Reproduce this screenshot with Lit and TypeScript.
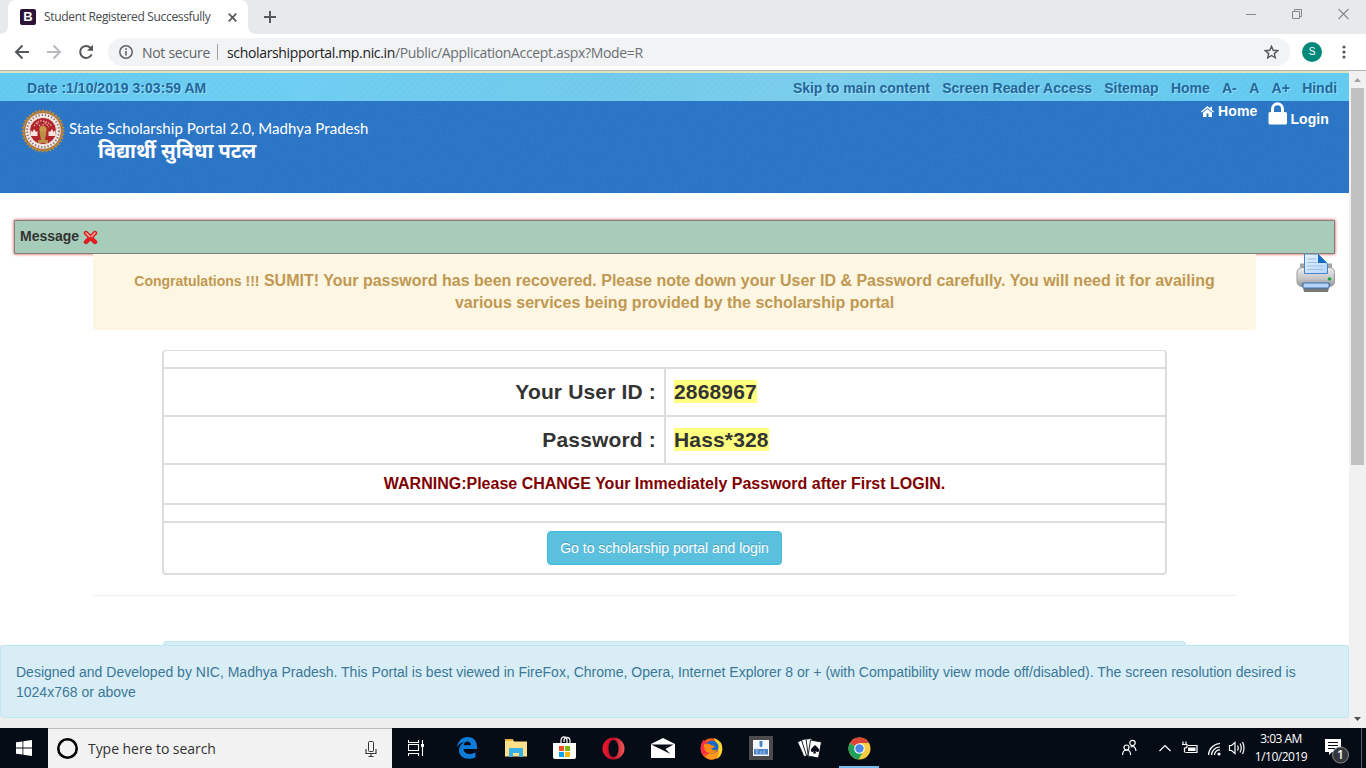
import { LitElement, html, css, svg } from "lit";
import { customElement } from "lit/decorators.js";

const seal = () => {
  const pts: string[] = [];
  for (let i = 0; i < 72; i++) {
    const r = i % 2 ? 19.6 : 22;
    const a = (i * Math.PI) / 36;
    pts.push(`${(22 + r * Math.cos(a)).toFixed(2)},${(22 + r * Math.sin(a)).toFixed(2)}`);
  }
  return html`<svg class="seal" width="44" height="44" viewBox="0 0 44 44">
    ${svg`<polygon points=${pts.join(" ")} fill="#b98637"/>`}
    <circle cx="22" cy="22" r="18.300" fill="#f3ebe6" stroke="#9a5a35" stroke-width=".8" />
    <circle cx="22" cy="22" r="16" fill="none" stroke="#8d6f72" stroke-width="2" stroke-dasharray="1.3 1.9" />
    <circle cx="22" cy="22" r="13.600" fill="#b0252b" stroke="#f3e2dc" stroke-width="1" />
    <path d="M13 17q4-6 9-5t9 5M16 14l4 4 4-4 4 4" stroke="#e0a49a" stroke-width="1.400" fill="none" stroke-dasharray="1.500 1.200" />
    <path d="M9.500 27v-6l2 2 1.500-3 2 3 1.500-1v5zM34.500 27v-6l-2 2-1.500-3-2 3-1.500-1v5z" fill="#f4e6df" />
    <circle cx="22" cy="20.500" r="3.600" fill="#c79a4a" />
    <path d="M18.500 23h7l-1.500 8h3v3H17v-3h3z" fill="#b98f45" />
  </svg>`;
};

@customElement("app-root")
export class AppRoot extends LitElement {
  static styles = css`
    :host { display: flex; flex-direction: column; width: 1366px; height: 768px; overflow: hidden; background: #fff; font-family: "Liberation Sans", Arial, sans-serif; color: #333; }
    * { box-sizing: border-box; }
    svg { display: block; flex: none; }
    .ui { font-family: "Open Sans", "Noto Sans", sans-serif; white-space: nowrap; }
    .tabs { height: 34px; flex: none; background: #e7eaed; display: flex; }
    .tab { width: 256px; height: 34px; display: flex; align-items: flex-end; position: relative; }
    .tab svg.shape { position: absolute; left: 0; top: 0; }
    .tabin { position: relative; display: flex; align-items: center; height: 34px; padding-left: 20px; width: 248px; }
    .fav { width: 16px; height: 16px; border-radius: 2px; background: #2b1436; color: #fff; font: bold 13px/16px "Liberation Sans", sans-serif; text-align: center; }
    .ttl { font-size: 12px; line-height: 16px; margin-left: 8px; width: 184px; color: #45494d; letter-spacing: -0.33px; }
    .plus { margin: 11px 0 0 8px; }
    .wins { margin-left: auto; display: flex; gap: 35px; padding: 8px 17px 0 0; }
    .bar { height: 36px; flex: none; display: flex; align-items: center; padding-left: 14px; background: #fff; }
    .bar .g { margin-right: 16px; }
    .omni { width: 1182px; height: 28px; border-radius: 14px; background: #f1f3f4; display: flex; align-items: center; padding-left: 11px; font-size: 14px; color: #5f6368; margin-left: -2px; }
    .ns { margin-left: 9px; letter-spacing: -0.3px; width: 75px; }
    .sep { width: 1px; height: 16px; background: #9aa0a6; margin-right: 9px; }
    .url { letter-spacing: -0.345px; color: #6b6f74; }
    .url b { font-weight: 400; color: #202124; }
    .star { margin: 0 11px 0 auto; }
    .av { width: 20px; height: 20px; border-radius: 50%; background: #00897b; color: #fff; font: 10px/20px "Liberation Sans", sans-serif; text-align: center; margin: 0 20px 0 12px; }
    .body { height: 658px; flex: none; display: flex; border-top: 1px solid #b3b3b6; }
    .page { width: 1349px; display: flex; flex-direction: column; overflow: hidden; background: #fff; }
    .strip { height: 30px; flex: none; border-top: 2px solid #d8e3c0; display: flex; align-items: center; padding: 2px 12px 0 27px;
      background: repeating-linear-gradient(135deg, rgba(255,255,255,.035) 0 2px, transparent 2px 5px), linear-gradient(90deg, #62c9f0, #6dcdf2 22%, #70c9ea 45%, #7acdec 62%, #6bc9eb 75%, #60caf1);
      font-weight: bold; font-size: 14px; color: #21689c; text-shadow: 1px 1px 0 rgba(255,255,255,.35); white-space: nowrap; }
    .date { letter-spacing: .03px; }
    .links { margin-left: auto; display: flex; gap: 12.4px; letter-spacing: -.04px; }
    .banner { height: 92px; flex: none; background: #2873c4; display: flex; position: relative; color: #fff; }
    .noise { position: absolute; left: 0; top: 0; opacity: .16; }
    .logo { display: flex; padding: 8px 0 0 21px; position: relative; }
    .names { padding: 10px 0 0 4px; white-space: nowrap; }
    .n1 { font: 400 15px/18px "Lato", "Noto Sans", sans-serif; letter-spacing: .05px; }
    .n2 { font: bold 20px/26px "Noto Sans Devanagari", "Noto Sans", "Lohit Devanagari", sans-serif; padding-left: 29px; margin-top: 3px; letter-spacing: -.05px; }
    .nav { margin-left: auto; position: relative; display: flex; align-items: flex-start; font-weight: bold; font-size: 14px; line-height: 20px; padding: 0 20px 0 0; letter-spacing: .1px; }
    .nav .h { display: flex; align-items: center; gap: 4px; margin-right: 11px; }
    .nav .l { padding-top: 8px; margin-left: 3px; }
    .lock { margin-top: 1px; }
    .msg { margin: 27px 14px 0; height: 34px; flex: none; border: 1px solid #7f7f7f; background: #a7ccb9; box-shadow: 0 0 3px #d33; font-weight: bold; font-size: 14px; display: flex; align-items: center; padding-left: 5px; gap: 4px; }
    .msg span { padding-bottom: 2px; }
    .row2 { height: 76px; flex: none; display: flex; padding-left: 93px; position: relative; }
    .alert { width: 1163px; background: #fcf6e2; border-radius: 0 0 4px 4px; color: #c09853; font-weight: bold; font-size: 16px; line-height: 22px; text-align: center; padding: 16px 34px 0; white-space: nowrap; }
    .alert small { font-size: 14px; }
    .printer { margin-left: 39px; }
    .tbl { margin: 20px 0 0 162px; width: 1005px; height: 225px; flex: none; border: 2px solid #ddd; border-top-width: 1px; border-radius: 4px; display: flex; flex-direction: column; font-weight: bold; }
    .r { display: flex; border-bottom: 2px solid #ddd; align-items: center; justify-content: center; flex: none; }
    .r.last { border: 0; height: 50px; }
    .e { height: 18px; }
    .v { height: 48px; font-size: 21px; letter-spacing: .16px; }
    .v > div { height: 46px; line-height: 46px; }
    .v .k { flex: none; width: 502px; border-right: 2px solid #ddd; text-align: right; padding-right: 8px; }
    .v .x { flex: 1; padding-left: 8px; }
    mark { background: #ffff80; color: #333; }
    .w { height: 40px; color: #800000; font-size: 16px; }
    .btn { width: 235px; height: 34px; background: #5bc0de; border: 1px solid #46b8da; border-radius: 4px; color: #fff; font: 14px/32px "Liberation Sans", sans-serif; text-align: center; padding: 0; text-shadow: 0 -1px 0 rgba(0,0,0,.2); white-space: nowrap; }
    .hr { margin: 20px 113px 0 93px; height: 1px; flex: none; background: #eee; }
    .peek { margin: 45px 163px 0 163px; height: 4px; flex: none; border: 1px solid #bce8f1; border-bottom: 0; border-radius: 4px 4px 0 0; background: #d9edf7; }
    .foot { height: 84px; flex: none; background: #eee; }
    .info { height: 73px; border: 1px solid #bce8f1; border-radius: 4px; background: #d9edf7; color: #3b7796; font-size: 14px; line-height: 20px; padding: 16px 15px; white-space: nowrap; }
    .sb { width: 17px; background: #f1f1f1; display: flex; flex-direction: column; align-items: center; justify-content: space-between; }
    .thumb { width: 13px; height: 377px; background: #c1c1c1; }
    .sb .top { display: flex; flex-direction: column; align-items: center; }
    .ar { width: 17px; height: 17px; }
    .task { height: 40px; flex: none; background: #050c16; display: flex; color: #fff; }
    .win { width: 48px; padding: 12px 16px; }
    .search { width: 372px; background: #f2f2f2; border-top: 1px solid #bbb; display: flex; align-items: center; padding: 0 14px 0 8px; font-size: 14px; color: #333; width: 344px; }
    .search span { margin-left: 9px; letter-spacing: -.05px; }
    .search .mic { margin-left: auto; }
    .apps { display: flex; }
    .app { width: 49px; display: flex; align-items: center; justify-content: center; }
    .app.first { width: 50px; padding-right: 1px; }
    .app.on { width: 40px; margin-left: 5px; border-bottom: 2px solid #76b9ed; padding-top: 2px; }
    .tray { margin-left: auto; display: flex; align-items: center; }
    .clock { font-size: 12px; line-height: 18px; text-align: center; width: 62px; letter-spacing: -.5px; margin-left: 4px; padding-bottom: 1px; }
    .note { margin: 5px 0 0 12px; }
    .badge { font: 600 12px "Open Sans", sans-serif; }
    .edge { width: 1px; height: 40px; background: #555c64; margin: 0 4px 0 11px; }
  `;

  render() {
    return html`
      <div class="tabs ui">
        <div class="tab">
          <svg class="shape" width="256" height="34"><path d="M0 34q8 0 8-8V8q0-8 8-8h224q8 0 8 8v18q0 8 8 8z" fill="#fff" /></svg>
          <div class="tabin"><div class="fav">B</div><div class="ttl">Student Registered Successfully</div>
            <svg width="9" height="9"><path d="M.7.7l7.6 7.6M8.3.7L.7 8.3" stroke="#55595e" stroke-width="1.700" /></svg></div>
        </div>
        <svg class="plus" width="12" height="12"><path d="M6 0v12M0 6h12" stroke="#55595e" stroke-width="2" /></svg>
        <div class="wins">
          <svg width="11" height="12"><path d="M0 6.500h10" stroke="#888" /></svg>
          <svg width="11" height="12"><path d="M.5 3.500h7v7h-7zM2.500 3V1.500h7v7H8" stroke="#888" fill="none" /></svg>
          <svg width="11" height="12"><path d="M.5 1l10 10M10.500 1l-10 10" stroke="#888" stroke-width="1.100" /></svg>
        </div>
      </div>
      <div class="bar ui">
        <svg class="g" width="16" height="16"><path d="M15 8H2M8.500 1.500L2 8l6.500 6.500" stroke="#54585d" stroke-width="2" fill="none" /></svg>
        <svg class="g" width="16" height="16"><path d="M1 8h13M7.500 1.500L14 8l-6.500 6.500" stroke="#b8babd" stroke-width="2" fill="none" /></svg>
        <svg class="g" width="16" height="16"><path d="M13.700 10.300A6 6 0 1 1 12.500 3.800L14 5.300" stroke="#54585d" stroke-width="2" fill="none" /><path d="M15 .8v6H9z" fill="#54585d" /></svg>
        <div class="omni">
          <svg width="14" height="14"><circle cx="7" cy="7" r="6.200" fill="none" stroke="#5f6368" stroke-width="1.500" /><path d="M7 6v4.500M7 3.300v1.700" stroke="#5f6368" stroke-width="1.600" /></svg>
          <div class="ns">Not secure</div><div class="sep"></div>
          <div class="url"><b>scholarshipportal.mp.nic.in</b>/Public/ApplicationAccept.aspx?Mode=R</div>
          <svg class="star" width="15" height="14" viewBox="0 0 15 14"><path d="M7.500 1.300l1.700 4 4.400.4-3.300 2.900 1 4.200-3.800-2.300-3.800 2.300 1-4.200L1.400 5.700l4.400-.4z" fill="none" stroke="#54585d" stroke-width="1.400" /></svg>
        </div>
        <div class="av">S</div>
        <svg width="4" height="14"><circle cx="2" cy="2" r="1.600" fill="#54585d" /><circle cx="2" cy="7" r="1.600" fill="#54585d" /><circle cx="2" cy="12" r="1.600" fill="#54585d" /></svg>
      </div>
      <div class="body">
        <div class="page">
          <div class="strip"><div class="date">Date :1/10/2019 3:03:59 AM</div>
            <div class="links"><span>Skip to main content</span><span>Screen Reader Access</span><span>Sitemap</span><span>Home</span><span>A-</span><span>A</span><span>A+</span><span>Hindi</span></div></div>
          <div class="banner">
            <svg class="noise" width="1349" height="92"><filter id="n"><feTurbulence type="fractalNoise" baseFrequency=".45" numOctaves="2" seed="4" /><feColorMatrix values="0 0 0 0 .1  0 0 0 0 .3  0 0 0 0 .7  1.500 0 0 0 -.2" /></filter><rect width="1349" height="92" filter="url(#n)" /></svg>
            <div class="logo">${seal()}<div class="names"><div class="n1">State Scholarship Portal 2.0, Madhya Pradesh</div><div class="n2">विद्यार्थी सुविधा पटल</div></div></div>
            <div class="nav">
              <div class="h"><svg width="13" height="11"><path d="M6.500 0L0 5.600l.9 1L6.500 2l5.600 4.600.9-1-2-1.700V.8H9.300v1.600z M6.500 3L2 6.800V11h3.500V7.500h2V11H11V6.800z" fill="#fff" /></svg><span>Home</span></div>
              <svg class="lock" width="19" height="24"><path d="M4.500 11V6.800a5 5 0 0 1 10 0V11" fill="none" stroke="#fff" stroke-width="3" /><rect x=".5" y="10" width="18.500" height="12.500" rx="1.500" fill="#fff" /></svg>
              <div class="l">Login</div>
            </div>
          </div>
          <div class="msg"><span>Message</span>
            <svg width="15" height="15" viewBox="0 0 15 15"><path d="M3 3l9 9M12 3l-9 9" stroke="#c71a1f" stroke-width="4.400" stroke-linecap="round" /><path d="M3 3l9 9M12 3l-9 9" stroke="#e81c1c" stroke-width="3" stroke-linecap="round" /><path d="M3 3l3.500 3.300M12 3L8.500 6.300" stroke="#ffa39c" stroke-width="1.700" stroke-linecap="round" fill="none" /></svg></div>
          <div class="row2">
            <div class="alert"><small>Congratulations !!!</small> <span class="a">SUMIT! Your password has been recovered. Please note down your User ID &amp; Password carefully. You will need it for availing<br />various services being provided by the scholarship portal</span></div>
            <svg class="printer" width="42" height="39" viewBox="0 0 42 39">
              <defs><linearGradient id="p" x2="0" y2="1"><stop stop-color="#ededed" /><stop offset=".6" stop-color="#c4c4c4" /><stop offset="1" stop-color="#929292" /></linearGradient><linearGradient id="q" x2="1" y2="1"><stop stop-color="#e8f2fd" /><stop offset="1" stop-color="#b5d5f8" /></linearGradient></defs>
              <path d="M5 9.500h32v8H5z" fill="#a5a5a5" /><rect x="2" y="13.500" width="37.500" height="19" rx="5" fill="url(#p)" stroke="#999" />
              <path d="M9.500 0h13.500l9.500 10v9.500h-23z" fill="url(#q)" stroke="#4383ce" /><path d="M23 0v9h9z" fill="#176bc4" /><path d="M12 5h9M12 8.500h10M12 12h16M12 15.500h16" stroke="#9dbfe6" />
              <path d="M7 29h28l-2 9H9z" fill="#777" /><path d="M8 29h26v5H8z" fill="#b6d5f7" stroke="#3571b6" /><circle cx="34.500" cy="25" r="1.800" fill="#1fa43b" />
            </svg>
          </div>
          <div class="tbl">
            <div class="r e"></div>
            <div class="r v"><div class="k">Your User ID :</div><div class="x"><mark>2868967</mark></div></div>
            <div class="r v"><div class="k">Password :</div><div class="x"><mark>Hass*328</mark></div></div>
            <div class="r w">WARNING:Please CHANGE Your Immediately Password after First LOGIN.</div>
            <div class="r e"></div>
            <div class="r last"><button class="btn">Go to scholarship portal and login</button></div>
          </div>
          <div class="hr"></div>
          <div class="peek"></div>
          <div class="foot"><div class="info">Designed and Developed by NIC, Madhya Pradesh. This Portal is best viewed in FireFox, Chrome, Opera, Internet Explorer 8 or + (with Compatibility view mode off/disabled). The screen resolution desired is<br />1024x768 or above</div></div>
        </div>
        <div class="sb"><div class="top"><svg class="ar" viewBox="0 0 17 17"><path d="M5 11h7L8.500 7z" fill="#a3a3a3" /></svg><div class="thumb"></div></div><svg class="ar" viewBox="0 0 17 17"><path d="M5 6h7l-3.500 4z" fill="#505050" /></svg></div>
      </div>
      <div class="task ui">
        <div class="win"><svg width="16" height="16"><path d="M0 2.300L6.500 1.400v6.100H0zM7.300 1.200L16 0v7.500H7.300zM0 8.400h6.500v6.200L0 13.700zM7.300 8.400H16V16l-8.700-1.200z" fill="#fff" /></svg></div>
        <div class="search"><svg width="23" height="23"><circle cx="11.500" cy="11.500" r="9.200" fill="none" stroke="#000" stroke-width="2.600" /></svg><span>Type here to search</span>
          <svg class="mic" width="13" height="18"><rect x="3.500" y="1.500" width="5" height="10" rx="1" fill="none" stroke="#333" /><path d="M1 9v4.500h10V9M6 13.500v3M3.500 16.500h5" stroke="#333" stroke-width="1.100" fill="none" /></svg></div>
        <div class="apps">
          <div class="app first"><svg width="17" height="16"><path d="M.5 0v2.500h10V0M.5 16v-2.500h10V16M.5 4.500h10v6H.5zM14.500 0v16" fill="none" stroke="#fff" stroke-width="1.100" /><rect x="13" y="4" width="3" height="3" fill="#fff" /></svg></div>
          <div class="app"><svg width="20" height="22" viewBox="0 0 20 22"><path d="M0 10C1 4 5 0 10.500 0 16.500 0 20 4 20 9.500V12H6.500c.2 3.500 3 5 6 5 2.300 0 4.300-.6 6-1.500v4.700c-1.800 1-4.300 1.600-7 1.600C5.500 21.800 2 18 2 13.500c0-3.700 2-6.700 5-8.300C4 5.500 1.500 7.500 0 10zm6.700-1.700h7.200c0-2.500-1.400-3.800-3.500-3.800-2 0-3.300 1.500-3.700 3.800z" fill="#0c7cd8" /></svg></div>
          <div class="app"><svg width="22" height="20"><path d="M0 1.500h8l1 2h13v15H0z" fill="#ffe08a" /><path d="M0 1h8v2H0z" fill="#e5b43c" /><path d="M4 19v-8q0-1 1-1h12q1 0 1 1v8h-4v-4H8v4z" fill="#3bb0e8" /></svg></div>
          <div class="app"><svg width="24" height="24"><path d="M8 7V5q0-4 3-4t3 4v2M11 6V5q0-3.500 3-3.500T17 5v2" fill="none" stroke="#e8e8e8" stroke-width="1.300" /><path d="M0 7h23v14q0 2-2 2H2q-2 0-2-2z" fill="#fff" /><path d="M6 10h5v5H6z" fill="#f25022" /><path d="M12 10h5v5h-5z" fill="#7fba00" /><path d="M6 16h5v5H6z" fill="#00a4ef" /><path d="M12 16h5v5h-5z" fill="#ffb900" /></svg></div>
          <div class="app"><svg width="23" height="23"><defs><linearGradient id="o" x2="1"><stop stop-color="#f01830" /><stop offset=".5" stop-color="#c01028" /><stop offset="1" stop-color="#f05a5a" /></linearGradient></defs><path fill-rule="evenodd" d="M11.500.5a11 11 0 1 0 0 22 11 11 0 1 0 0-22zm0 2.500c3 0 5 3.500 5 8.500s-2 8.500-5 8.500-5-3.500-5-8.500 2-8.500 5-8.500z" fill="url(#o)" /></svg></div>
          <div class="app"><svg width="24" height="20"><path d="M0 6l12-6 12 6v14H0z" fill="#fff" /><path d="M0 6.500h22.500L14.500 11l5 5-7-3.500z" fill="#050c16" /></svg></div>
          <div class="app"><svg width="23" height="23"><circle cx="11.500" cy="12" r="10.700" fill="#ff5a1c" /><path d="M14 1q9 3 8.300 12-1 7-6 9.200Q19 17 18 11z" fill="#ffd52e" /><path d="M3 3q-5 9 0 15l6-2V6z" fill="#ff3045" /><path d="M5 20q6 5 13 0l1-6-10 3z" fill="#ff9a1c" /><circle cx="12" cy="10" r="6.500" fill="#1768c2" /><path d="M4 7q5-1 7 1l4 1q-1 2-4 2.500 2 3 6 1-2 5-8 3.500Q3 14 4 7z" fill="#ff8a16" /></svg></div>
          <div class="app"><svg width="24" height="24"><path d="M0 0h24v24H0z" fill="#4b4b4d" /><path d="M4 4h16v16H4z" fill="#f5f8fc" /><path d="M10.500 5h3v5l-1.500 1.500-1.500-1.500zM5 13h14v5.500H5z" fill="#4c84c6" /><path d="M6 13h4M12 15v3M15 14v4M8 14v4" stroke="#a9c8ec" /></svg></div>
          <div class="app"><svg width="25" height="22"><g fill="#fff" stroke="#050c16" stroke-width=".9"><path d="M.5 5l4-2 7 15-3.500 1.500q-1 0-1.500-1z" /><path d="M4.500 3l5-1.500 4 18-4-1z" /><path d="M9 2l6-.5v18l-3.500 1z" /><path d="M13.500 3L24.500 5l-3 16-10.500-2z" /></g><path d="M18 8q-5 4-4 6t3 0l-1 2.500h3L18.500 14q2.500 2 3.500 0t-4-6z" fill="#050c16" /></svg></div>
          <div class="app on"><svg width="23" height="23" viewBox="0 0 23 23"><circle cx="11.500" cy="11.500" r="11" fill="#f9cd43" /><path d="M11.500 11.500L2 6A11 11 0 0 1 21 6H11.500z" fill="#dd4437" /><path d="M2 6a11 11 0 0 0 8.500 16.500l5-8.500-4-2z" fill="#21a05c" /><circle cx="11.500" cy="11.500" r="5.300" fill="#fff" /><circle cx="11.500" cy="11.500" r="4.200" fill="#4a86e8" /></svg></div>
        </div>
        <div class="tray">
          <svg width="124" height="18" viewBox="0 0 124 18"><g fill="none" stroke="#fff" stroke-width="1.200">
            <circle cx="4.500" cy="8.500" r="2.500" /><path d="M.6 16q0-5 4-5t4 5" /><circle cx="10.500" cy="4" r="2.700" /><path d="M8.500 8q5-2 5.500 4" />
            <path d="M37.500 12l5.500-5.500L48.500 12" /><path d="M61 2.500v3M64 2.500v3M60 5.500h5v2q0 1.500-2.500 1.500v4.500M66 6.500h9v7h-11.500" /><path d="M66 8.500h7.500v3.500h-7.500z" fill="#fff" stroke="none" />
            <path d="M86.500 16A12 12 0 0 1 98 4.500M89.500 16A8.500 8.500 0 0 1 98 8M92.500 16a5 5 0 0 1 5.500-5" /><circle cx="97" cy="15" r="1" fill="#fff" />
            <path d="M107.500 6.500h2l3.500-3v11l-3.500-3h-2z" /><path d="M115.500 6.500q1.500 2.500 0 5M118 4.500q2.500 4.500 0 9M120.500 3q3 6 0 12" /></g></svg>
          <div class="clock">3:03 AM<br />1/10/2019</div>
          <svg class="note" width="26" height="26" viewBox="0 0 26 26"><path d="M1 1h16v13H8l-3 3v-3H1z" fill="#fff" /><path d="M4 4.500h10M4 7.500h10M4 10.500h7" stroke="#050c16" stroke-width="1.200" /><circle cx="16.500" cy="17" r="8" fill="#34363a" stroke="#8b8d90" /><text class="badge" x="16.500" y="21.300" fill="#fff" text-anchor="middle">1</text></svg>
          <div class="edge"></div>
        </div>
      </div>`;
  }
}
